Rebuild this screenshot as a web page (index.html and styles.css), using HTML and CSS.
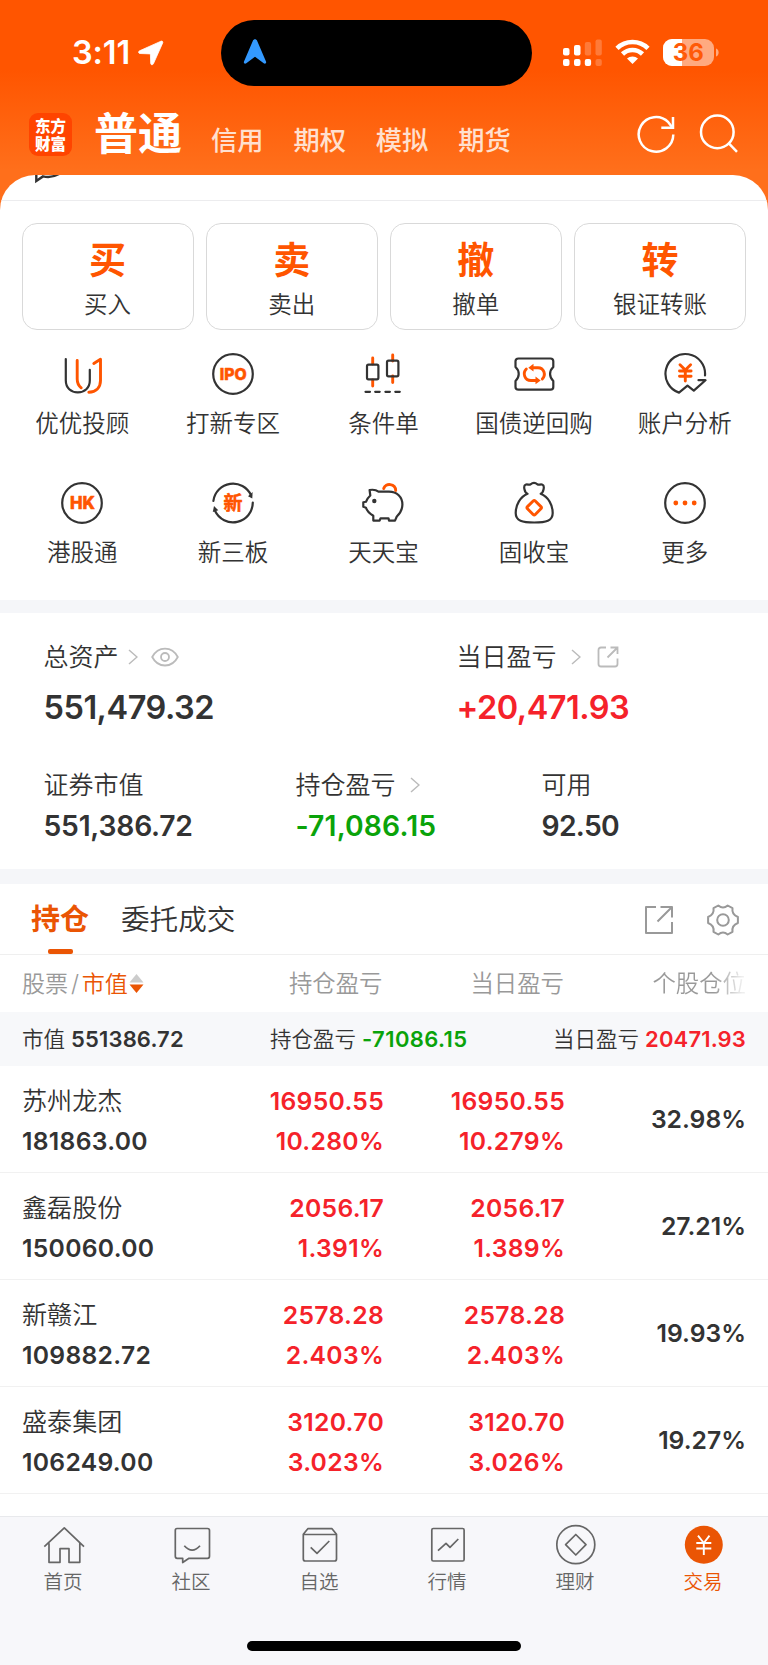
FILE: index.html
```
<!DOCTYPE html>
<html lang="zh-CN">
<head>
<meta charset="utf-8">
<title>交易</title>
<link rel="stylesheet" href="styles.css">
</head>
<body>
<div class="app">
  <header class="top">
    <div class="status">
      <div class="clock"><span class="clock-time">3:11</span>
        <svg class="loc" width="26" height="26" viewBox="0 0 26 26"><path d="M1.600 10.800 23 1.200c1.200-.5 2.200.5 1.700 1.700L15.400 23.800c-.7 1.500-2.600 1.200-2.700-.4L12.400 13.900 2 13.500C.3 13.400 0 11.500 1.600 10.800z" fill="#fff" stroke="#fff" stroke-width=".8"/></svg>
      </div>
      <div class="island">
        <svg width="24" height="26" viewBox="0 0 24 26"><path d="M9.900 1.800c.8-2 3.400-2 4.200 0L23 22.400c.7 1.800-.8 3-2.300 1.900L12 17.800 3.300 24.300C1.800 25.400.3 24.200 1 22.400z" fill="#3399ff"/></svg>
      </div>
      <div class="signals">
        <svg class="cell" width="40" height="28" viewBox="0 0 40 28" fill="#fff"><rect x="1" y="9" width="6.500" height="7.500" rx="2"/><rect x="12" y="6" width="6.500" height="10.500" rx="2"/><rect x="22.800" y="3" width="6.300" height="13.500" rx="2" opacity=".22"/><rect x="33.500" y="0.400" width="6.300" height="16.100" rx="2" opacity=".22"/><rect x="1" y="20" width="6.500" height="7" rx="2"/><rect x="12" y="20" width="6.500" height="7" rx="2"/><rect x="22.800" y="20" width="6.300" height="7" rx="2"/><rect x="33.500" y="20" width="6.300" height="7" rx="2" opacity=".22"/></svg>
        <svg class="wifi" width="35" height="26" viewBox="0 0 35 26"><g fill="none" stroke="#fff" stroke-width="4.600"><path d="M2 9.300a22.400 22.400 0 0 1 31 0"/><path d="M7.500 15a14.400 14.400 0 0 1 20 0"/></g><path d="M12 19.600a8 8 0 0 1 11 0L17.500 25z" fill="#fff"/></svg>
        <svg class="battery" width="57" height="28" viewBox="0 0 57 28"><defs><clipPath id="bat"><rect x="0" y="0" width="51" height="27" rx="9"/></clipPath></defs><g clip-path="url(#bat)"><rect width="51" height="27" fill="#fff" opacity=".5"/><rect width="19" height="27" fill="#fff"/></g><path d="M53 9.500c3.500 1 3.500 7 0 8z" fill="#fff" opacity=".5"/><text x="25.300" y="22.300" text-anchor="middle" class="bat-text">36</text></svg>
      </div>
    </div>
    <nav class="nav">
      <div class="logo">东方<br>财富</div>
      <span class="nav-on">普通</span>
      <div class="nav-list"><span>信用</span><span>期权</span><span>模拟</span><span>期货</span></div>
      <div class="nav-act">
        <svg width="40" height="40" viewBox="0 0 40 40" fill="none" stroke="#fff" stroke-width="2.500"><path d="M37.300 20.500A17.300 17.300 0 1 1 32.300 8.200L36 13"/><path d="M37 3V13.800H25.300"/></svg>
        <svg width="40" height="40" viewBox="0 0 40 40" fill="none" stroke="#fff" stroke-width="2.500"><circle cx="18.300" cy="17.900" r="16.300"/><path d="M29.600 29.200 38 37.800"/></svg>
      </div>
    </nav>
  </header>

  <main class="sheet">
    <div class="peek"><svg width="30" height="10" viewBox="0 0 30 10"><path d="M3.300 -3V6L10 1.400C14 2.200 21 1.900 26 -1" fill="none" stroke="#333" stroke-width="2.400"/></svg></div>
    <section class="cards">
      <div class="card"><b>买</b><span>买入</span></div>
      <div class="card"><b>卖</b><span>卖出</span></div>
      <div class="card"><b>撤</b><span>撤单</span></div>
      <div class="card"><b>转</b><span>银证转账</span></div>
    </section>
    <section class="grid">
      <div class="cell-item"><svg class="ic" viewBox="0 0 44 44"><path d="M5.800 7V28.500C5.800 36 11 40.400 17.800 40.400S29.800 36 29.800 28.500V17.800"/><g class="o"><path d="M17.200 8.500V27c0 4 1.200 6.600 4 8.800M33.800 11.500 40.500 7.200V28.500C40.500 35.500 36 40 28.800 40.200"/></g></svg><span>优优投顾</span></div>
      <div class="cell-item"><svg class="ic" viewBox="0 0 44 44"><circle cx="22" cy="22" r="19.800"/><text class="t" x="8.700" y="28" font-size="16.500" textLength="27" lengthAdjust="spacingAndGlyphs">IPO</text></svg><span>打新专区</span></div>
      <div class="cell-item"><svg class="ic" viewBox="0 0 44 44"><g class="o"><path d="M11.700 6V12M11.700 28V34M31.700 3V9M31.700 24V30.500"/></g><rect x="6" y="12.700" width="11.400" height="14.600" rx="1.500"/><rect x="26" y="8.700" width="11.400" height="15.600" rx="1.500"/><path d="M4.500 39.800h4.500M14.200 39.800h4.500M24.400 39.800h4.500M34.300 39.800h4.500"/></svg><span>条件单</span></div>
      <div class="cell-item"><svg class="ic" viewBox="0 0 44 44"><path d="M6.500 6.500H38.500Q41.300 6.500 41.300 9.300V15C37 19 37 25 41.300 29V35Q41.300 37.700 38.500 37.700H6.500Q3.500 37.700 3.500 35V29C7.800 25 7.800 19 3.500 15V9.300Q3.500 6.500 6.500 6.500Z"/><g class="o w"><path d="M14.300 17C10.300 21 12.500 28.500 19 28.500H25M30.300 27C34.300 23 32 15.700 26 15.700H21"/></g><path class="of" d="M21.500 11.800V19.600L16.300 15.700zM23.500 24.500V32.300L28.700 28.400z"/></svg><span>国债逆回购</span></div>
      <div class="cell-item"><svg class="ic" viewBox="0 0 44 44"><path d="M42 23.500A19.800 19.800 0 1 0 16 40.600L24.500 33.600 30.800 38.600 42.500 28.200H35.500"/><g class="o w"><path d="M17 12.800 22.300 18 27.600 12.800M22.300 18V29M16.500 19h11.600M16.500 24.300h11.600"/></g></svg><span>账户分析</span></div>
      <div class="cell-item"><svg class="ic" viewBox="0 0 44 44"><circle cx="22" cy="22" r="19.800"/><text class="t" x="10" y="28" font-size="17" textLength="25" lengthAdjust="spacingAndGlyphs">HK</text></svg><span>港股通</span></div>
      <div class="cell-item"><svg class="ic" viewBox="0 0 44 44"><path d="M2.400 19.800A19.800 19.800 0 0 1 40 14.200M41.800 21.500A19.800 19.800 0 0 1 4 29.800"/><path class="kf" d="M37 15.300 41.600 11 41.300 17.500zM1.800 31 3 25 7.300 29.300z"/><text class="t cjk" x="22" y="28.800" font-size="19" text-anchor="middle">新</text></svg><span>新三板</span></div>
      <div class="cell-item"><svg class="ic" viewBox="0 0 44 44"><path d="M2.300 21.300V25.700L5 26.700Q6.200 31 12.300 34.700V39.600H18.600L19.500 37.300H27.500L28 39.600H34L35.800 35.500C39.500 32 41.400 28 41.400 23.500 41.400 16 36 10.600 28 10.600H17.500C15 8.700 12 8.400 8.600 9L9.300 14.500C7 16.500 6 18.500 5 20.700Z"/><circle class="kf" cx="13.300" cy="20" r="2.200"/><g class="o"><path d="M22.700 7.500C24.500 1.500 34.500 2.500 34.700 9.500"/></g></svg><span>天天宝</span></div>
      <div class="cell-item"><svg class="ic" viewBox="0 0 44 44"><path d="M15.500 12.800C12.500 11.500 11 4.800 13.500 3.700 15.500 2.800 17 4.500 18.500 3.300 20.500 1.800 23.500 1.800 25.500 3.300 27 4.500 28.500 2.800 30.500 3.700 33 4.800 31.500 11.500 28.700 12.800 36.500 16 40.700 24 40.700 32 40.700 40 34 41.500 22.200 41.500S3.700 40 3.700 32C3.700 24 8 16 15.500 12.800Z"/><g class="o w"><rect x="16.700" y="21.200" width="11" height="11" rx="1.500" transform="rotate(45 22.200 26.700)"/></g></svg><span>固收宝</span></div>
      <div class="cell-item"><svg class="ic" viewBox="0 0 44 44"><circle cx="22" cy="22" r="19.800"/><g class="of"><circle cx="12.800" cy="22" r="2.400"/><circle cx="22" cy="22" r="2.400"/><circle cx="31.200" cy="22" r="2.400"/></g></svg><span>更多</span></div>
    </section>

    <section class="assets">
      <div class="row-a">
        <div class="asset a1"><div class="lab">总资产<svg class="chev" viewBox="0 0 10 16"><path d="M1 1 9 8 1 15"/></svg><svg class="eye" viewBox="0 0 28 20"><path d="M1.200 10C7-1.300 21-1.300 26.800 10 21 21.300 7 21.300 1.200 10z"/><circle cx="14" cy="10" r="4"/></svg></div><div class="big">551,479.32</div></div>
        <div class="asset"><div class="lab">当日盈亏<svg class="chev c2" viewBox="0 0 10 16"><path d="M1 1 9 8 1 15"/></svg><svg class="share" viewBox="0 0 22 22"><path d="M9 1.500H4Q1.500 1.500 1.500 4V18Q1.500 20.500 4 20.500H18Q20.500 20.500 20.500 18V12.500M13.500 1.500H20.500V8M20.500 1.500 10.500 11.500"/></svg></div><div class="big red">+20,471.93</div></div>
      </div>
      <div class="row-b">
        <div class="asset b1"><div class="lab">证券市值</div><div class="mid">551,386.72</div></div>
        <div class="asset b2"><div class="lab">持仓盈亏<svg class="chev c2" viewBox="0 0 10 16"><path d="M1 1 9 8 1 15"/></svg></div><div class="mid green wide">-71,086.15</div></div>
        <div class="asset"><div class="lab">可用</div><div class="mid narrow">92.50</div></div>
      </div>
    </section>

    <section class="tabs">
      <span class="tab on">持仓</span><span class="tab">委托成交</span>
      <div class="tab-act">
        <svg width="30" height="30" viewBox="0 0 30 30"><path d="M12 2H2V28H28V17M16.500 2H28V12.500M27 3 13.500 16.500"/></svg>
        <svg width="34" height="34" viewBox="0 0 34 34"><path d="M12.300 2.500Q17 6.500 21.700 2.500L26.500 5.200Q25.500 11.500 31.900 14V20Q25.500 22.500 26.500 28.800L21.700 31.500Q17 27.500 12.300 31.500L7.500 28.800Q8.500 22.500 2.100 20V14Q8.500 11.500 7.500 5.200Z"/><circle cx="17" cy="17" r="5.800"/></svg>
      </div>
    </section>
    <section class="thead">
      <div class="h1">股票<i>/</i><em>市值</em><svg width="15" height="20" viewBox="0 0 15 20"><path d="M7.500 0 14.500 8.500H.5z" fill="#ccc"/><path d="M7.500 19 .5 10.500h14z" fill="#ea5504"/></svg></div>
      <div class="h2">持仓盈亏</div><div class="h3">当日盈亏</div><div class="h4">个股仓位</div>
    </section>
    <section class="sum">
      <div>市值 <b>551386.72</b></div>
      <div class="s2">持仓盈亏 <b class="green wide">-71086.15</b></div>
      <div class="s3">当日盈亏 <b class="red">20471.93</b></div>
    </section>
    <section class="rows">
      <div class="stock"><div class="n"><span>苏州龙杰</span><b>181863.00</b></div><div class="p"><b>16950.55</b><b>10.280%</b></div><div class="q"><b>16950.55</b><b>10.279%</b></div><div class="r">32.98%</div></div>
      <div class="stock"><div class="n"><span>鑫磊股份</span><b>150060.00</b></div><div class="p"><b>2056.17</b><b>1.391%</b></div><div class="q"><b>2056.17</b><b>1.389%</b></div><div class="r">27.21%</div></div>
      <div class="stock"><div class="n"><span>新赣江</span><b>109882.72</b></div><div class="p"><b>2578.28</b><b>2.403%</b></div><div class="q"><b>2578.28</b><b>2.403%</b></div><div class="r">19.93%</div></div>
      <div class="stock"><div class="n"><span>盛泰集团</span><b>106249.00</b></div><div class="p"><b>3120.70</b><b>3.023%</b></div><div class="q"><b>3120.70</b><b>3.026%</b></div><div class="r">19.27%</div></div>
    </section>
  </main>

  <footer class="bar">
    <div class="bar-items">
      <div class="bi"><svg viewBox="0 0 44 44"><path d="M2.300 23.700 22.300 4.900 42 23.700M7 20.300V39.300H18V25.700H27V39.300H37.800V20.300"/></svg><span>首页</span></div>
      <div class="bi"><svg viewBox="0 0 44 44"><path d="M7 5.500H37.500Q39.500 5.500 39.500 7.500V33.300Q39.500 35.300 37.500 35.300H19L12.700 39.500V35.300H7.200Q5.300 35.300 5.300 33.300V7.500Q5.300 5.500 7 5.500ZM14.300 22.700Q22.200 31.500 30 22.700"/></svg><span>社区</span></div>
      <div class="bi"><svg viewBox="0 0 44 44"><path d="M5.300 11.300 9.800 5.700H34L38.500 11.300V36Q38.500 38 36.500 38H7.300Q5.300 38 5.300 36ZM5.300 11.500H38.500M12.700 24.300 19 30.300 31.300 18"/></svg><span>自选</span></div>
      <div class="bi"><svg viewBox="0 0 44 44"><rect x="5.800" y="5.500" width="32.300" height="32.500" rx="1.500"/><path d="M12 27.700 20 20.300 24 24.300 32.300 16"/></svg><span>行情</span></div>
      <div class="bi"><svg viewBox="0 0 44 44"><circle cx="21.800" cy="21.700" r="19"/><path d="M21.800 11.500 32 21.700 21.800 32 11.600 21.700Z"/></svg><span>理财</span></div>
      <div class="bi act"><svg viewBox="0 0 44 44"><circle cx="21.800" cy="21.700" r="19"/><path d="M16 12.700 21.800 20 27.500 12.700M21.800 20V32M14.300 20H29.300M14.300 25.500H29.300"/></svg><span>交易</span></div>
    </div>
    <div class="home"></div>
  </footer>
</div>
</body>
</html>
```
FILE: styles.css
```
* { box-sizing: border-box; }
body { margin: 0; background: #fff; font-family: Inter, "Noto Sans CJK SC", sans-serif; font-weight: 350; color: #333; }
.app { width: 768px; height: 1665px; overflow: hidden; display: flex; flex-direction: column; background: linear-gradient(#ff5500 0, #ff5500 70px, #ff6f1b 170px, #ff6f1b 230px); }
b { font-weight: 600; }
.red { color: #f5222a; }
.green { color: #0aa30a; }

.top { height: 175px; flex: none; }
.status { height: 106px; padding: 20px 48px 0 72px; display: flex; }
.clock { width: 149.500px; display: flex; align-items: center; height: 66px; }
.clock-time { font-size: 32.500px; font-weight: 600; color: #fff; letter-spacing: -.1px; line-height: 40px; }
.loc { margin-left: 8px; }
.island { width: 312.500px; height: 66px; border-radius: 33px; background: #000; padding: 19px 0 0 22px; }
.signals { margin-left: 29.500px; padding-top: 18.500px; display: flex; height: 60px; }
.wifi { margin-left: 13.500px; }
.battery { margin-left: 13px; flex: none; }
.cell, .wifi { flex: none; }
.bat-text { font: 700 24px Inter, sans-serif; fill: #ff5a08; }
.nav { display: flex; height: 69px; padding: 0 29px; }
.logo { width: 43px; height: 43px; margin-top: 7px; padding-top: 3px; border-radius: 9px; background: #ff4400; text-align: center; color: #fff; font: 900 15.500px/18px "Noto Sans CJK SC", sans-serif; }
.nav-on { margin-left: 22px; font-size: 44px; font-weight: 700; color: #fff; line-height: 57px; }
.nav-list { margin-left: 29px; display: flex; gap: 29.800px; font-size: 26.300px; font-weight: 500; color: #ffe0cf; line-height: 70px; }
.nav-act { margin-left: auto; margin-top: 8px; display: flex; gap: 23px; }

.sheet { background: #fff; border-radius: 35px 35px 0 0; height: 1341px; flex: none; overflow: hidden; }
.peek { height: 26px; border-bottom: 1.500px solid #ececee; padding-left: 33px; }
.peek svg, .ic, .bi svg { display: block; }
.cards { display: grid; grid-template-columns: repeat(4, 1fr); gap: 12px; padding: 22px 22px 0 21.500px; height: 129px; }
.card { border: 1.500px solid #d9d9d9; border-radius: 15px; display: flex; flex-direction: column; align-items: center; height: 107px; }
.card b { font-size: 37px; line-height: 44px; margin-top: 14.500px; color: #ff5500; font-weight: 700; }
.card span { font-size: 23.500px; line-height: 32px; margin-top: 6px; }
.grid { display: grid; grid-template-columns: repeat(5, 1fr); grid-auto-rows: 129px; padding: 22px 8px 0 7px; height: 270px; }
.cell-item { display: flex; flex-direction: column; align-items: center; }
.cell-item span { font-size: 23.500px; line-height: 32px; margin-top: 12px; }
.ic { width: 44px; height: 44px; fill: none; stroke: #333; stroke-width: 2.200; stroke-linejoin: round; stroke-linecap: round; }
.o { stroke: #ff5500; stroke-width: 2.900; }
.w { stroke-width: 2.900; }
.of { fill: #ff5500; stroke: none; }
.kf { fill: #333; stroke: none; }
.t { fill: #ff5500; stroke: #ff5500; stroke-width: .5; font-family: Inter, sans-serif; font-weight: 800; }
.cjk { font-family: "Noto Sans CJK SC", sans-serif; font-weight: 700; }

.assets { border: solid #f5f6f9; border-width: 13.500px 0 15px; height: 284px; padding-left: 43.500px; }
.row-a { display: flex; padding-top: 26px; height: 129px; }
.row-b { display: flex; padding-top: 25px; }
.lab { font-size: 25px; line-height: 36px; display: flex; align-items: center; }
.a1 { width: 413px; }
.b1 { width: 252px; }
.b2 { width: 246px; }
.big { font-size: 32.500px; font-weight: 600; line-height: 40px; margin-top: 13px; letter-spacing: -.5px; }
.mid { font-size: 28.300px; font-weight: 600; line-height: 36px; margin-top: 5px; letter-spacing: -.23px; }
.mid.wide { letter-spacing: .15px; }
.mid.narrow { letter-spacing: -.7px; }
.chev { width: 10px; height: 16px; margin-left: 9px; fill: none; stroke: #bbb; stroke-width: 1.500; }
.c2 { margin-left: 14px; }
.eye { width: 28px; height: 20px; margin-left: 13px; fill: none; stroke: #bbb; stroke-width: 1.800; }
.share { width: 22px; height: 22px; margin-left: 16px; fill: none; stroke: #bbb; stroke-width: 1.800; }

.tabs { height: 71px; border-bottom: 1px solid #efefef; display: flex; padding: 0 28px 0 31px; }
.tab { font-size: 28.600px; line-height: 72px; margin-right: 33px; }
.on { font-size: 29px; margin-right: 32px; color: #ea5504; font-weight: 700; position: relative; }
.on::after { content: ""; position: absolute; left: 16.500px; bottom: 0; width: 25px; height: 5px; border-radius: 2px; background: #ea5504; }
.tab-act { margin-left: auto; display: flex; align-items: center; gap: 31px; padding-top: 1px; }
.tab-act svg { fill: none; stroke: #999; stroke-width: 2; stroke-linejoin: round; }
.tab-act svg:first-child { margin-right: 1px; }

.thead { height: 57px; display: grid; grid-template-columns: 200px 160.500px 181.500px 182px; padding-left: 22px; font-size: 23.400px; line-height: 58px; color: #999; }
.h1 { display: flex; align-items: center; font-size: 23.100px; }
.h1 i { font-style: normal; width: 13.500px; text-align: center; }
.h1 em { font-style: normal; color: #ea5504; }
.h1 svg { margin-left: 1px; }
.h2, .h3, .h4 { text-align: right; }
.h4 { background: linear-gradient(90deg, #999 150px, #eee 178px); -webkit-background-clip: text; background-clip: text; color: transparent; }

.sum { height: 54px; background: #f7f8fa; padding: 0 22px; display: grid; grid-template-columns: 248px 1fr auto; font-size: 21.500px; line-height: 55px; }
.sum b { font-size: 22px; letter-spacing: .15px; }
.sum b.wide { letter-spacing: .4px; }
.stock { height: 107px; border-bottom: 1px solid #f1f1f1; display: grid; grid-template-columns: 200px 162px 181px 181px; padding-left: 22px; }
.stock b, .r { font-size: 24.700px; font-weight: 600; letter-spacing: .3px; line-height: 40px; }
.n, .p, .q { display: flex; flex-direction: column; padding-top: 15px; }
.n span { font-size: 25.100px; line-height: 40px; }
.p, .q { text-align: right; color: #f5222a; }
.r { text-align: right; line-height: 107px; letter-spacing: 0; }

.bar { flex: none; height: 149px; background: #f7f7fa; border-top: 1.500px solid #e8e9ec; position: relative; }
.bar-items { display: grid; grid-template-columns: repeat(6, 1fr); padding-top: 6px; }
.bi { display: flex; flex-direction: column; align-items: center; color: #666; }
.bi svg { width: 44px; height: 44px; fill: none; stroke: #666; stroke-width: 1.700; stroke-linejoin: round; }
.bi span { font-size: 19.500px; line-height: 28px; margin-top: 1px; padding-right: 2px; }
.act { color: #ea5504; }
.act circle { fill: #ea5504; stroke: none; }
.bi.act path { stroke: #fff; stroke-width: 1.900; }
.home { width: 274px; height: 10px; border-radius: 5px; background: #000; margin: 45px 0 0 246.500px; }
```
